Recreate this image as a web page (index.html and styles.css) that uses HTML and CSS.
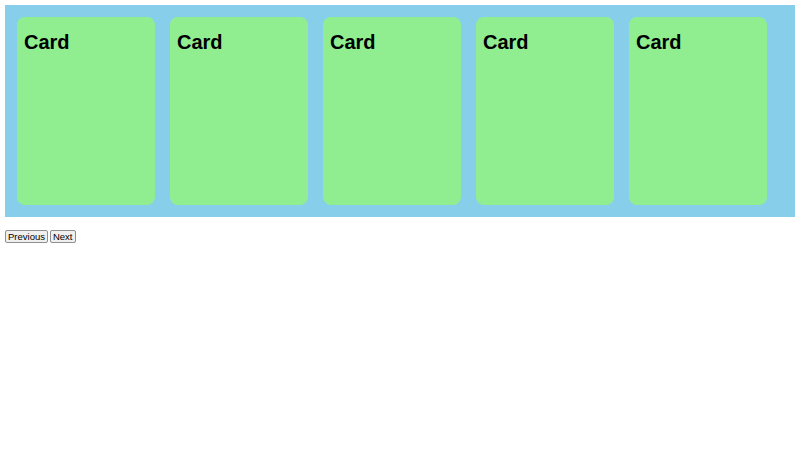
FILE: index.html
```html
<!DOCTYPE html>
<html>
<head>
<meta charset="utf-8">
<link rel="stylesheet" href="styles.css">
</head>
<body>
<div class="carousel">
  <div class="card"><h2 class="card-title">Card</h2></div>
  <div class="card"><h2 class="card-title">Card</h2></div>
  <div class="card"><h2 class="card-title">Card</h2></div>
  <div class="card"><h2 class="card-title">Card</h2></div>
  <div class="card"><h2 class="card-title">Card</h2></div>
</div>
<div class="controls">
  <button class="btn">Previous</button>
  <button class="btn">Next</button>
</div>
</body>
</html>
```

FILE: styles.css
```css
body {
  margin: 5px;
  font-family: "Liberation Sans", Arial, sans-serif;
  background: #ffffff;
}
.carousel {
  display: flex;
  gap: 15px;
  padding: 12px;
  background: #87ceeb;
  overflow: hidden;
}
.card {
  flex: 0 0 138px;
  height: 188px;
  box-sizing: border-box;
  padding: 14px 7px 0;
  background: #90ee90;
  border-radius: 8px;
}
.card-title {
  margin: 0;
  font-size: 20px;
  font-weight: bold;
  color: #000;
}
.controls {
  display: flex;
  gap: 2px;
  margin-top: 13px;
}
.btn {
  font-family: "Liberation Sans", Arial, sans-serif;
  font-size: 9.5px;
  padding: 0 2px;
  height: 13px;
  line-height: 11px;
  border: 1px solid #8f8f8f;
  border-radius: 2px;
  background: #efefef;
  color: #000;
}
```
